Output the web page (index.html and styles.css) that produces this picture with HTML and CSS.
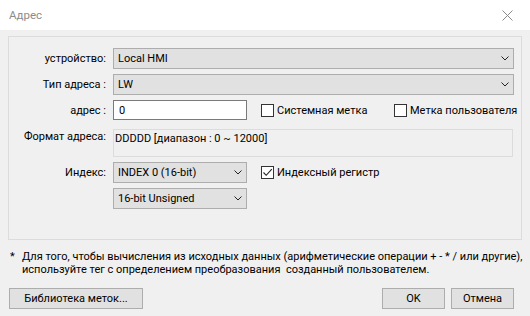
FILE: index.html
```html
<!DOCTYPE html>
<html>
<head>
<meta charset="utf-8">
<link rel="stylesheet" href="styles.css">
</head>
<body>
<div class="window">
  <div class="titlebar">
    <span class="title">Адрес</span>
    <svg class="close" width="11" height="11" viewBox="0 0 11 11"><path d="M0.5 0.5 L10.5 10.5 M10.5 0.5 L0.5 10.5" stroke="#8a8a8a" stroke-width="1" fill="none"/></svg>
  </div>
  <div class="content">
    <div class="group">
      <div class="lbl r1">устройство:</div>
      <div class="select wide r1"><span>Local HMI</span><svg class="chev" width="8" height="5" viewBox="0 0 8 5"><path d="M0.5 0.5 L4 4 L7.5 0.5" stroke="#222" fill="none"/></svg></div>

      <div class="lbl r2">Тип адреса :</div>
      <div class="select wide r2"><span>LW</span><svg class="chev" width="8" height="5" viewBox="0 0 8 5"><path d="M0.5 0.5 L4 4 L7.5 0.5" stroke="#222" fill="none"/></svg></div>

      <div class="lbl r3">адрес :</div>
      <div class="ctrl r3">
        <div class="input">0</div>
        <label class="check c1"><span class="box"></span>Системная метка</label>
        <label class="check c2"><span class="box"></span>Метка пользователя</label>
      </div>

      <div class="lbl r4 top">Формат адреса:</div>
      <div class="format r4">DDDDD [диапазон : 0 ~ 12000]</div>

      <div class="lbl r5">Индекс:</div>
      <div class="ctrl r5">
        <div class="select narrow"><span>INDEX 0 (16-bit)</span><svg class="chev" width="8" height="5" viewBox="0 0 8 5"><path d="M0.5 0.5 L4 4 L7.5 0.5" stroke="#222" fill="none"/></svg></div>
        <label class="check c1"><span class="box"><svg width="11" height="11" viewBox="0 0 11 11"><path d="M1.5 5.5 L4.2 8.3 L9.8 2.2" stroke="#222" stroke-width="1.1" fill="none"/></svg></span>Индексный регистр</label>
      </div>

      <div class="lbl r6"></div>
      <div class="ctrl r6">
        <div class="select narrow"><span>16-bit Unsigned</span><svg class="chev" width="8" height="5" viewBox="0 0 8 5"><path d="M0.5 0.5 L4 4 L7.5 0.5" stroke="#222" fill="none"/></svg></div>
      </div>
    </div>

    <div class="note">
      <span class="star">*</span>
      <p>Для того, чтобы вычисления из исходных данных (арифметические операции + - * / или другие),<br>используйте тег с определением преобразования&nbsp; созданный пользователем.</p>
    </div>

    <div class="buttons">
      <button class="btn lib">Библиотека меток...</button>
      <div class="right">
        <button class="btn small">OK</button>
        <button class="btn small">Отмена</button>
      </div>
    </div>
  </div>
</div>
</body>
</html>
```
FILE: styles.css
```css
* { box-sizing: border-box; }
html, body { margin: 0; padding: 0; }
body {
  width: 530px;
  height: 316px;
  overflow: hidden;
  background: #f0f0f0;
  font-family: Roboto, "Liberation Sans", sans-serif;
  font-size: 11px;
  color: #000;
}
.window { width: 530px; height: 316px; display: flex; flex-direction: column; }
.titlebar {
  height: 30px;
  background: #fff;
  display: flex;
  align-items: center;
  justify-content: space-between;
  padding: 0 17px 0 9px;
}
.title { color: #8c8c8c; font-size: 11.5px; }
.close { display: block; }
.content { flex: 1; padding: 6px 0 0 8px; }
.group {
  width: 514px;
  height: 204px;
  border: 1px solid #dcdcdc;
  display: grid;
  grid-template-columns: 97px 401px;
  column-gap: 7px;
  align-content: start;
  padding-top: 11px;
}
.lbl {
  text-align: right;
  display: flex;
  align-items: center;
  justify-content: flex-end;
  white-space: nowrap;
}
.lbl.top { align-items: flex-start; padding-top: 1px; }
.r1 { grid-row: 1; height: 21px; }
.r2 { grid-row: 2; height: 21px; margin-top: 5px; }
.r3 { grid-row: 3; height: 20px; margin-top: 5px; }
.r4 { grid-row: 4; height: 28px; margin-top: 9px; }
.r5 { grid-row: 5; height: 21px; margin-top: 5px; }
.r6 { grid-row: 6; height: 21px; margin-top: 5px; }
.select {
  background: #e1e1e1;
  border: 1px solid #adadad;
  display: flex;
  align-items: center;
  justify-content: space-between;
  padding: 0 4px 0 4px;
  white-space: nowrap;
  flex: none;
}
.select.wide { width: 401px; }
.select.narrow { width: 134px; height: 21px; }
.chev { display: block; }
.ctrl { display: flex; align-items: center; }
.input {
  width: 134px;
  height: 20px;
  background: #fff;
  border: 1px solid #7a7a7a;
  padding-left: 5px;
  display: flex;
  align-items: center;
  flex: none;
}
.check { display: flex; align-items: center; white-space: nowrap; flex: none; }
.check.c1 { margin-left: 14px; width: 133px; }
.box {
  width: 13px;
  height: 13px;
  border: 1px solid #333;
  background: #fff;
  margin-right: 3px;
  flex: none;
  display: flex;
  align-items: center;
  justify-content: center;
}
.box svg { display: block; }
.format {
  width: 400px;
  border: 1px solid #dcdcdc;
  padding: 1px 0 0 1px;
  line-height: 15px;
  white-space: nowrap;
}
.note {
  display: flex;
  margin: 10px 0 0 2px;
  line-height: 13px;
}
.star { width: 12px; flex: none; }
.note p { margin: 0; white-space: nowrap; }
.buttons {
  display: flex;
  justify-content: space-between;
  margin-top: 12px;
  padding-right: 16px;
}
.btn {
  font-family: inherit;
  font-size: 11px;
  color: #000;
  background: #e1e1e1;
  border: 1px solid #adadad;
  height: 21px;
  padding: 0;
  margin: 0;
}
.btn.lib { width: 134px; margin-left: 1px; }
.right { display: flex; gap: 6px; }
.btn.small { width: 63px; }
```
